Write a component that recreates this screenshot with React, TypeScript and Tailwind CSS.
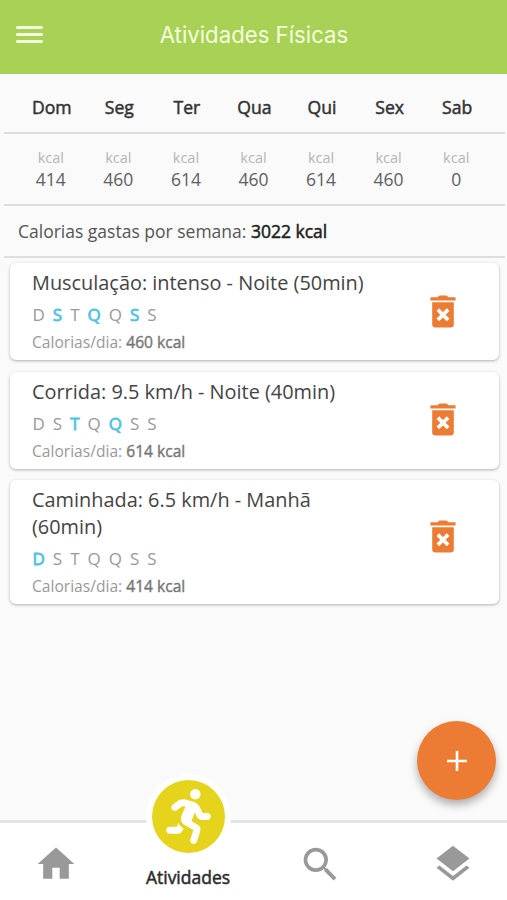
import { FaRunning } from 'react-icons/fa'
import { MdHome, MdLayers, MdSearch } from 'react-icons/md'
import clsx from 'clsx'

type Activity = {
  title: string
  days: number[]
  kcal: number
}

const WEEK = [
  { label: 'Dom', kcal: 414 },
  { label: 'Seg', kcal: 460 },
  { label: 'Ter', kcal: 614 },
  { label: 'Qua', kcal: 460 },
  { label: 'Qui', kcal: 614 },
  { label: 'Sex', kcal: 460 },
  { label: 'Sab', kcal: 0 },
]

const DAY_LETTERS = ['D', 'S', 'T', 'Q', 'Q', 'S', 'S']

const ACTIVITIES: Activity[] = [
  { title: 'Musculação: intenso - Noite (50min)', days: [1, 3, 5], kcal: 460 },
  { title: 'Corrida: 9.5 km/h - Noite (40min)', days: [2, 4], kcal: 614 },
  { title: 'Caminhada: 6.5 km/h - Manhã (60min)', days: [0], kcal: 414 },
]

function TrashIcon() {
  return (
    <svg width="26" height="33" viewBox="0 0 26 33" fill="#ec7c34">
      <path d="M1 2.2h6.5L9 .8q.4-.4 1-.4h6q.6 0 1 .4l1.5 1.4H25q.6 0 .6.6v2.1q0 .5-.6.5H1q-.6 0-.6-.5V2.8q0-.6.6-.6Z" />
      <path d="M2.2 7.2h21.6v22q0 3.2-3.2 3.2H5.4q-3.2 0-3.2-3.2Z" />
      <path d="m9.2 16 7.6 7.6m0-7.6-7.6 7.6" stroke="#fff" strokeWidth="3.8" strokeLinecap="square" />
    </svg>
  )
}

function ActivityCard({ activity }: { activity: Activity }) {
  return (
    <div className="group flex items-center rounded-md bg-white pt-[6px] pr-[43px] pb-[7px] pl-[22px] shadow-[0_1px_3px_rgba(0,0,0,0.3)]">
      <div className="flex-1">
        <h2 className="w-[345px] text-[19.9px] leading-[27px] text-[#444]">{activity.title}</h2>
        <div className="mt-[6px] flex gap-[8px] pl-[0.5px] text-[17px] leading-[26px] text-[#999]">
          {DAY_LETTERS.map((letter, i) => (
            <span key={i} className={clsx(activity.days.includes(i) && 'text-[#4fc3df] [-webkit-text-stroke:0.8px]')}>
              {letter}
            </span>
          ))}
        </div>
        <p className="mt-[3px] text-[15.6px] leading-[22px] text-[#999]">
          Calorias/dia: <span className="text-[#777] [-webkit-text-stroke:0.4px]">{activity.kcal} kcal</span>
        </p>
      </div>
      <button type="button" aria-label="Excluir" className="group-last:mb-[10px]">
        <TrashIcon />
      </button>
    </div>
  )
}

export default function App() {
  return (
    <div className="relative flex h-[900px] w-[507px] flex-col overflow-hidden bg-[#fafafa] font-['Open_Sans',sans-serif]">
      <header className="grid h-[74px] shrink-0 grid-cols-[74px_1fr_74px] items-center bg-[#a8d156] pb-[5px]">
        <button type="button" aria-label="Menu" className="ml-4 flex w-[27px] flex-col gap-1">
          <span className="h-[3px] rounded-sm bg-[#f4ffdf]" />
          <span className="h-[3px] rounded-sm bg-[#f4ffdf]" />
          <span className="h-[3px] rounded-sm bg-[#f4ffdf]" />
        </button>
        <h1 className="pl-px text-center font-['Inter',sans-serif] text-[22.2px] text-[#f4ffdf]">Atividades Físicas</h1>
      </header>

      <section className="mr-[2px] ml-1 shrink-0">
        <div className="grid h-[60px] grid-cols-7 items-center border-b-2 border-[#dedede] pt-[8px] pr-[14px] pl-[14px] text-center text-[17.6px] text-[#333] [-webkit-text-stroke:0.5px]">
          {WEEK.map((d) => (
            <span key={d.label}>{d.label}</span>
          ))}
        </div>
        <div className="grid h-[72px] grid-cols-7 border-b-2 border-[#dedede] pt-[14px] pr-[15px] pl-[13px] text-center">
          {WEEK.map((d) => (
            <div key={d.label}>
              <p className="text-[14.5px] leading-[20px] text-[#b5b5b5]">kcal</p>
              <p className="text-[17.5px] leading-[23px] text-[#606060]">{d.kcal}</p>
            </div>
          ))}
        </div>
        <p className="h-[52px] border-b-2 border-[#dedede] pl-[14px] text-[17.5px] leading-[51px] text-[#555]">
          Calorias gastas por semana: <span className="text-[#222] [-webkit-text-stroke:0.5px]">3022 kcal</span>
        </p>
      </section>

      <main className="flex flex-1 flex-col gap-[11.5px] pt-[5px] pr-2 pl-[10px]">
        {ACTIVITIES.map((a) => (
          <ActivityCard key={a.title} activity={a} />
        ))}
      </main>

      <button
        type="button"
        aria-label="Adicionar"
        className="absolute top-[721px] left-[417px] flex size-[79px] items-center justify-center rounded-full bg-[#ec7c34] shadow-[0_5px_9px_rgba(0,0,0,0.3)]"
      >
        <svg width="20" height="20" viewBox="0 0 20 20" stroke="#fff" strokeWidth="2.6">
          <path d="M10 0v20M0 10h20" />
        </svg>
      </button>

      <nav className="relative flex h-[80px] shrink-0 border-t-[3px] border-[#e4e4e4] bg-white text-[#999]">
        <div className="flex w-[112px] justify-center pt-[19px]">
          <MdHome size={44} />
        </div>
        <div className="flex w-[152px] flex-col items-center">
          <div className="absolute top-[-49px] flex size-[85px] items-center justify-center rounded-full bg-white">
            <div className="flex size-[73px] items-center justify-center rounded-full bg-[#e6d41c] text-white">
              <FaRunning size={55} />
            </div>
          </div>
          <span className="mt-[41px] text-[17.5px] leading-[26px] text-[#2c2c2c] [-webkit-text-stroke:0.5px]">Atividades</span>
        </div>
        <div className="flex w-[113px] justify-center pt-[19px]">
          <MdSearch size={45} />
        </div>
        <div className="flex w-[130px] justify-center pt-[19px] pl-[21px]">
          <MdLayers size={44} />
        </div>
      </nav>
    </div>
  )
}
